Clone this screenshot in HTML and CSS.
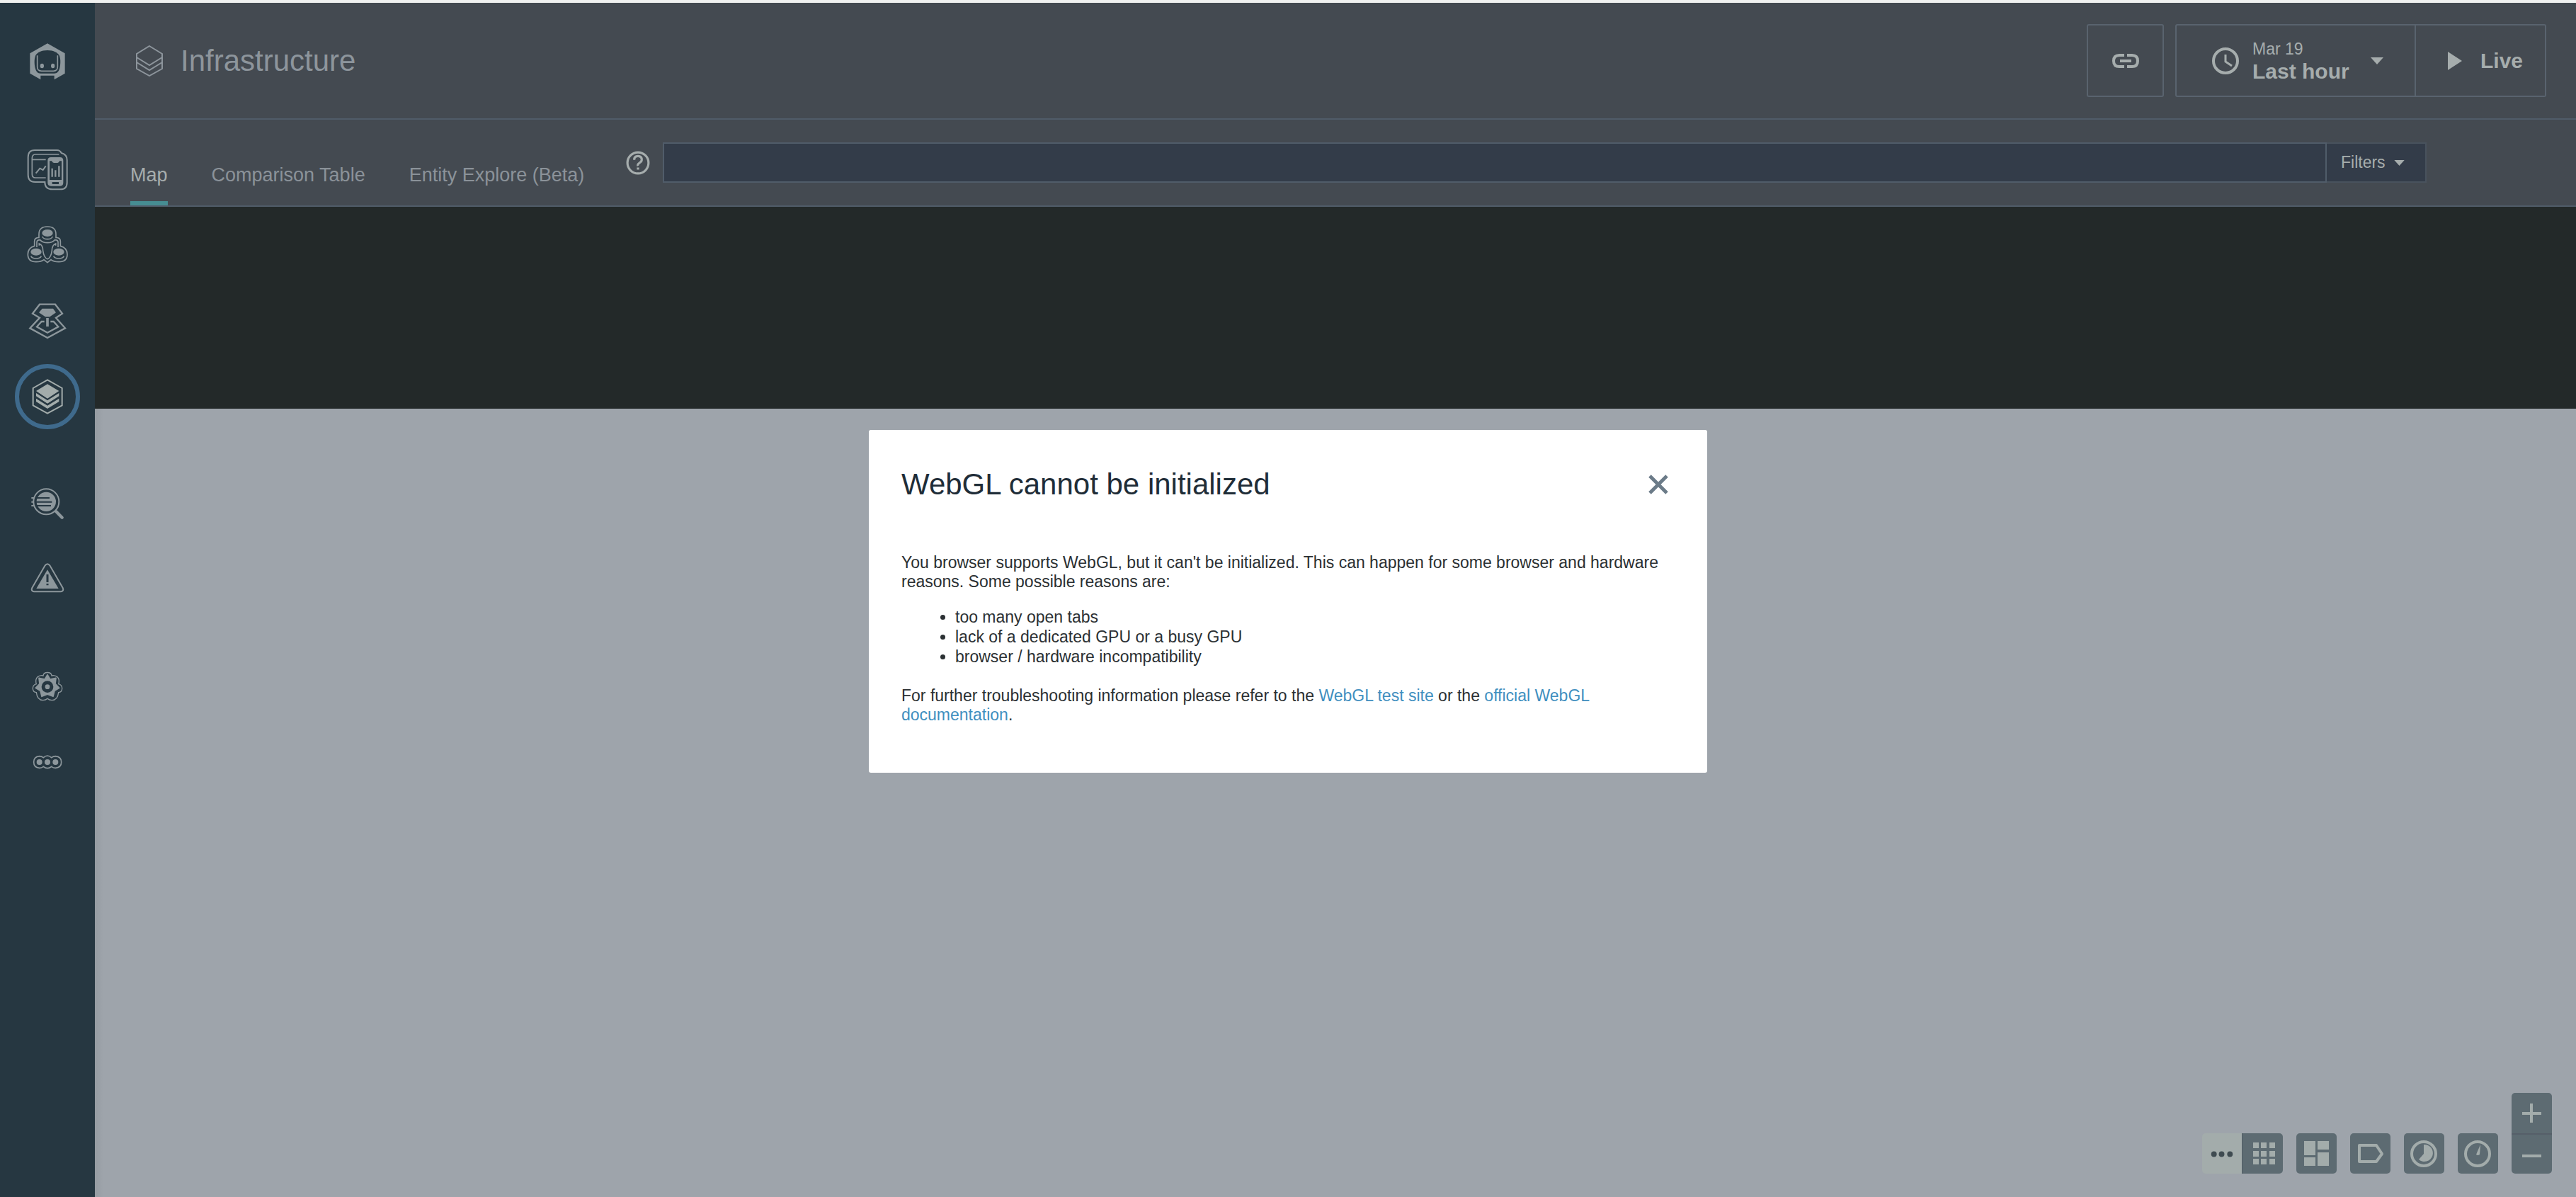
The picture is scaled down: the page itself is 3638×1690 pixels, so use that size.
FILE: index.html
```html
<!DOCTYPE html>
<html lang="en">
<head>
<meta charset="utf-8">
<title>Infrastructure</title>
<link rel="stylesheet" href="styles.css">
</head>
<body>
<div class="app">
  <nav class="sidebar" aria-label="Main">
    <a class="nav-item brand" href="#" aria-label="Home">
      <svg class="nav-icon" viewBox="103 102 192 192">
        <path fill="currentColor" fill-rule="evenodd" d="M199 121 273 163V248L228 274V257H170V274L125 248V163ZM199 150C172 150 155 160 148 173C142 190 144 212 147 225C151 241 158 248 170 248H228C240 248 247 241 251 225C254 212 256 190 250 173C243 160 226 150 199 150Z"/>
        <path fill="none" stroke="currentColor" stroke-width="5" d="M156 172V220Q156 238 174 238H224Q242 238 242 220V172"/>
        <ellipse cx="176" cy="216" rx="8" ry="10" fill="currentColor"/><ellipse cx="222" cy="216" rx="8" ry="10" fill="currentColor"/>
      </svg>
    </a>
    <div class="nav-group">
      <a class="nav-item" href="#" aria-label="Websites and mobile apps">
        <svg class="nav-icon" viewBox="103 85 192 192" fill="none" stroke="currentColor">
          <path stroke-width="6" d="M145 100H240Q252 100 258 112Q282 118 282 142V237Q282 266 254 266H220Q188 266 188 235H147Q117 235 117 205V130Q117 100 145 100Z"/>
          <path stroke-width="5" d="M248 118H148Q134 118 134 134V202Q134 217 148 217H192M136 140H192"/>
          <path stroke-width="6" d="M150 198 167 177 180 184 192 167"/>
          <path fill="currentColor" stroke="none" fill-rule="evenodd" d="M214 130H252Q266 130 266 144V238Q266 252 252 252H214Q200 252 200 238V144Q200 130 214 130ZM208 152V226H259V146H250Q248 154 242 154H226Q219 154 218 146H208ZM219 235V244H247V235Z"/>
          <path stroke-width="7" d="M219 177V213M233 185V213M248 167V213"/>
        </svg>
      </a>
      <a class="nav-item" href="#" aria-label="Applications">
        <svg class="nav-icon" viewBox="103 400 192 192" fill="none" stroke="currentColor" stroke-width="5">
          <path d="M163 450Q163 418 199 418Q235 418 235 450V464Q254 464 254 480V500Q283 508 283 535Q283 567 247 567Q225 567 214 558L199 570 184 558Q173 567 151 567Q116 567 116 535Q116 508 144 500V480Q144 464 163 464Z"/>
          <path d="M154 505V484Q154 474 168 474Q178 486 199 486Q220 486 230 474Q244 474 244 484V505M164 498V490Q180 496 180 520Q184 550 199 555Q214 550 218 520Q218 496 234 490V498"/>
          <g fill="currentColor" stroke="none"><ellipse cx="199" cy="445" rx="23" ry="15"/><ellipse cx="151" cy="525" rx="23" ry="15"/><ellipse cx="247" cy="525" rx="23" ry="15"/></g>
          <path d="M177 460Q182 471 199 471Q216 471 221 460M129 543Q134 553 151 553Q168 553 173 543M225 543Q230 553 247 553Q264 553 269 543"/>
        </svg>
      </a>
      <a class="nav-item" href="#" aria-label="Platforms">
        <svg class="nav-icon" viewBox="103 64 192 192" fill="none" stroke="currentColor" stroke-width="7">
          <path d="M166 90H232L262 129 235 147 274 191 199 232 125 191 166 147 136 129Z"/>
          <path fill="currentColor" stroke="none" d="M177 108H223L235 125 209 143H190L163 125Z"/>
          <path d="M186 163H174L154 185 199 210 245 185 225 163H212"/><path stroke-width="11" d="M199 148V184"/>
        </svg>
      </a>
      <a class="nav-item active" href="#" aria-label="Infrastructure" aria-current="page">
        <svg class="nav-icon" viewBox="103 383 192 192" fill="none" stroke="currentColor" stroke-width="6">
          <path d="M199 408 261 443V516L199 550 138 516V443Z"/>
          <path fill="currentColor" stroke="none" d="M199 426 248 455 199 487 151 455ZM151 464 199 495 248 464V477L199 508 151 477ZM151 487 199 517 248 487V500L199 530 151 500Z"/>
        </svg>
      </a>
    </div>
    <div class="nav-group">
      <a class="nav-item" href="#" aria-label="Analytics">
        <svg class="nav-icon" viewBox="103 56 192 192" fill="none" stroke="currentColor">
          <circle cx="194" cy="144" r="54" stroke-width="6"/>
          <circle cx="194" cy="144" r="41" fill="currentColor" stroke="none"/>
          <path class="cut" stroke-width="6" d="M150 128H208M150 145H218M150 161H214"/>
          <path stroke-width="6" d="M131 128H142M131 145H140M131 161H142"/>
          <path stroke-width="13" stroke-linecap="round" d="M236 186 261 211"/>
        </svg>
      </a>
      <a class="nav-item" href="#" aria-label="Events">
        <svg class="nav-icon" viewBox="103 376 192 192" fill="none" stroke="currentColor" stroke-width="6">
          <path d="M189 413Q199 400 209 413L264 508Q270 521 256 524H142Q128 521 134 508Z"/>
          <path fill="currentColor" stroke="none" d="M199 431 246 511H152Z"/>
          <path class="cut" stroke-width="9" d="M199 451V484M199 490V497"/>
        </svg>
      </a>
    </div>
    <div class="nav-group">
      <a class="nav-item" href="#" aria-label="Settings">
        <svg class="nav-icon" viewBox="103 51 192 192" fill="none" stroke="currentColor">
          <path stroke-width="4" d="M181 102C182 84 216 84 217 102C232 98 248 108 248 124C248 130 248 132 246 137C266 142 266 170 246 173C244 190 238 206 218 206Q206 206 199 199Q192 206 180 206C160 206 154 190 152 173C132 170 132 142 152 137C150 132 150 130 150 124C150 108 166 98 181 102Z"/>
          <path fill="currentColor" stroke="currentColor" stroke-width="5" stroke-linejoin="round" d="M199 98 210 117 235 112 232 136 249 154 229 166 223 190 199 181 175 190 169 166 149 154 166 136 163 112 188 117Z"/>
          <circle class="hole" cx="199" cy="149" r="25"/><circle cx="199" cy="149" r="10" fill="currentColor" stroke="none"/>
        </svg>
      </a>
      <a class="nav-item" href="#" aria-label="More">
        <svg class="nav-icon" viewBox="103 372 192 192" fill="none" stroke="currentColor" stroke-width="5">
          <path d="M182 449Q191 441 199 441Q207 441 216 449Q224 443 233 443Q258 445 258 468Q258 491 233 493Q224 493 216 487Q207 494 199 494Q191 494 182 487Q174 493 165 493Q141 491 141 468Q141 445 165 443Q174 443 182 449Z"/>
          <g fill="currentColor" stroke="none"><circle cx="165" cy="468" r="12"/><circle cx="199" cy="468" r="12"/><circle cx="233" cy="468" r="12"/></g>
        </svg>
      </a>
    </div>
  </nav>

  <main class="main">
    <header class="header">
      <svg class="title-icon" viewBox="0 0 40 44" fill="none" stroke="currentColor" stroke-width="2">
        <path d="M20 1 38 12V33L20 43 2 33V12ZM2 17 20 28 38 17M2 24 20 35 38 24"/>
      </svg>
      <h1 class="title">Infrastructure</h1>
      <div class="header-actions">
        <button class="box-button link-button" aria-label="Copy link">
          <svg class="link-icon" viewBox="0 0 40 24" fill="none" stroke="currentColor" stroke-width="4">
            <path d="M18 4H11Q3 4 3 12T11 20H18M22 4H29Q37 4 37 12T29 20H22M12 12H28"/>
          </svg>
        </button>
        <div class="time-group">
          <button class="box-button time-button">
            <svg class="clock-icon" viewBox="0 0 38 38" fill="none" stroke="currentColor" stroke-width="4">
              <circle cx="19" cy="19" r="17"/><path stroke-width="3" d="M19 10V20L28 26"/>
            </svg>
            <span class="time-text"><span class="time-date">Mar 19</span><span class="time-range">Last hour</span></span>
            <svg class="caret" viewBox="0 0 18 10"><path fill="currentColor" d="M0 0H18L9 10Z"/></svg>
          </button>
          <button class="box-button live-button">
            <svg class="play-icon" viewBox="0 0 20 26"><path fill="currentColor" d="M0 0 20 13 0 26Z"/></svg>
            Live
          </button>
        </div>
      </div>
    </header>

    <div class="toolbar">
      <div class="tabs">
        <a class="tab selected" href="#" aria-current="page">Map</a>
        <a class="tab" href="#">Comparison Table</a>
        <a class="tab" href="#">Entity Explore (Beta)</a>
      </div>
      <div class="search">
        <button class="help" aria-label="Search help">
          <svg class="help-icon" viewBox="0 0 32 32" fill="none" stroke="currentColor" stroke-width="3">
            <circle cx="16" cy="16" r="14"/><path d="M11 12Q11 7 16 7T21 12Q21 14 18 16T16 20M16 22V25"/>
          </svg>
        </button>
        <input class="query" type="text" aria-label="Search query">
        <button class="filters">Filters
          <svg class="caret small" viewBox="0 0 18 10"><path fill="currentColor" d="M0 0H18L9 10Z"/></svg>
        </button>
      </div>
    </div>

    <div class="band"></div>
    <section class="map" aria-label="Map">
      <div class="map-tools">
        <div class="tool-pair">
          <button class="tool on" aria-label="More"><svg viewBox="0 0 57 57" fill="currentColor"><circle cx="17" cy="29" r="4"/><circle cx="28" cy="29" r="4"/><circle cx="40" cy="29" r="4"/></svg></button>
          <button class="tool" aria-label="Grid"><svg viewBox="0 0 57 57" fill="currentColor"><path d="M15 13h8v8h-8zM26 13h8v8h-8zM38 13h8v8h-8zM15 25h8v8h-8zM26 25h8v8h-8zM38 25h8v8h-8zM15 36h8v8h-8zM26 36h8v8h-8zM38 36h8v8h-8z"/></svg></button>
        </div>
        <button class="tool" aria-label="Layout"><svg viewBox="0 0 57 57" fill="currentColor"><path d="M11 11h16v20H11zM30 11h16v12H30zM11 34h16v12H11zM30 27h16v19H30z"/></svg></button>
        <button class="tool" aria-label="Labels"><svg viewBox="0 0 57 57" fill="none" stroke="currentColor" stroke-width="4" stroke-linejoin="round"><path d="M13 17H37L45 29 37 40H13Z"/></svg></button>
        <button class="tool" aria-label="Usage"><svg viewBox="0 0 57 57" fill="none" stroke="currentColor" stroke-width="4"><circle cx="28" cy="29" r="17"/><path fill="currentColor" stroke="none" d="M28 16A12 12 0 1 1 21 37L28 29Z"/></svg></button>
        <button class="tool" aria-label="Performance"><svg viewBox="0 0 57 57" fill="none" stroke="currentColor" stroke-width="4"><circle cx="28" cy="29" r="17"/><path fill="currentColor" stroke="none" d="M32 16 31 30Q28 32 26 30Z"/></svg></button>
        <div class="zoom">
          <button class="tool" aria-label="Zoom in"><svg viewBox="0 0 57 57" stroke="currentColor" stroke-width="4"><path d="M15 29H42M28 15V42"/></svg></button>
          <button class="tool" aria-label="Zoom out"><svg viewBox="0 0 57 57" stroke="currentColor" stroke-width="4"><path d="M15 30H42"/></svg></button>
        </div>
      </div>
    </section>
  </main>
</div>

<div class="overlay">
  <div class="modal" role="dialog" aria-modal="true" aria-labelledby="modal-title">
    <div class="modal-head">
      <h2 class="modal-title" id="modal-title">WebGL cannot be initialized</h2>
      <button class="close" aria-label="Close">
        <svg class="close-icon" viewBox="0 0 28 28" stroke="currentColor" stroke-width="5"><path d="M2 2 26 26M26 2 2 26"/></svg>
      </button>
    </div>
    <div class="modal-body">
      <p>You browser supports WebGL, but it can't be initialized. This can happen for some browser and hardware reasons. Some possible reasons are:</p>
      <ul>
        <li>too many open tabs</li>
        <li>lack of a dedicated GPU or a busy GPU</li>
        <li>browser / hardware incompatibility</li>
      </ul>
      <p>For further troubleshooting information please refer to the <a href="#">WebGL test site</a> or the <a href="#">official WebGL documentation</a>.</p>
    </div>
  </div>
</div>
</body>
</html>
```
FILE: styles.css
```css
* { box-sizing: border-box; }

body {
  margin: 0;
  font-family: "Liberation Sans", Arial, sans-serif;
  font-size: 23px;
  line-height: 27px;
}

button {
  font: inherit;
  color: inherit;
  background: none;
  border: 0;
  padding: 0;
}

svg { display: block; flex: none; }

.app {
  display: flex;
  min-height: 100vh;
  border-top: 4px solid #f0f1f0;
}

/* Sidebar */
.sidebar {
  flex: none;
  display: flex;
  flex-direction: column;
  gap: 44px;
  width: 134px;
  padding-top: 29px;
  background: #263741;
}

.nav-group { display: flex; flex-direction: column; }

.nav-item {
  display: flex;
  align-items: center;
  justify-content: center;
  height: 107px;
  color: #8d979c;
}

.brand { margin-bottom: 1px; }
.nav-icon { width: 64px; height: 64px; }
.cut { stroke: #263741; }
.hole { fill: #263741; stroke: none; }

.active {
  width: 92px;
  height: 92px;
  margin: 8px auto 7px;
  border: 6px solid #3f6a8c;
  border-radius: 50%;
  color: #a3acab;
}

/* Header */
.main {
  flex: 1;
  display: flex;
  flex-direction: column;
  min-width: 0;
}

.header {
  display: flex;
  align-items: center;
  height: 165px;
  padding: 0 42px 0 57px;
  border-bottom: 2px solid #505c69;
  background: #444a51;
  color: #a6adad;
}

.title-icon { width: 40px; height: 44px; color: #8d959c; }

.title {
  margin: 0 0 0 24px;
  font-size: 42px;
  line-height: 48px;
  font-weight: 400;
  color: #8d959c;
}

.header-actions {
  display: flex;
  gap: 16px;
  margin-left: auto;
}

.time-group { display: flex; }

.box-button {
  display: flex;
  align-items: center;
  height: 103px;
  border: 2px solid #59636e;
  border-radius: 3px;
}

.link-button { width: 109px; justify-content: center; }
.link-icon { width: 40px; height: 24px; }

.time-button {
  width: 340px;
  padding-left: 50px;
  border-radius: 3px 0 0 3px;
  text-align: left;
}

.clock-icon { width: 38px; height: 38px; }

.time-text {
  display: flex;
  flex-direction: column;
  margin: 0 30px 0 19px;
  padding-top: 4px;
}

.time-range { font-size: 30px; line-height: 36px; font-weight: 700; }
.caret { width: 18px; height: 10px; }

.live-button {
  width: 184px;
  gap: 26px;
  padding-left: 45px;
  border-left: 0;
  border-radius: 0 3px 3px 0;
  font-size: 30px;
  font-weight: 700;
}

.play-icon { width: 20px; height: 26px; }

/* Tabs and search */
.toolbar {
  display: flex;
  height: 123px;
  padding: 0 211px 0 50px;
  border-bottom: 2px solid #505c69;
  background: #444a51;
}

.tabs { display: flex; gap: 62px; }

.tab {
  display: flex;
  align-items: flex-end;
  padding-bottom: 22px;
  border-bottom: 6px solid transparent;
  font-size: 27px;
  line-height: 30px;
  color: #8b9299;
  text-decoration: none;
  white-space: nowrap;
}

.selected { color: #a6adad; border-color: #468d92; }

.search {
  flex: 1;
  display: flex;
  height: 57px;
  margin: 32px 0 0 59px;
  color: #a6adad;
}

.help { display: flex; align-items: center; margin-right: 18px; }
.help-icon { width: 34px; height: 34px; }

.query {
  flex: 1;
  min-width: 0;
  padding: 0 16px;
  border: 2px solid #505c69;
  border-radius: 0;
  background: #333c49;
  color: inherit;
  font: inherit;
}

.filters {
  display: flex;
  align-items: center;
  gap: 12px;
  width: 141px;
  padding-left: 20px;
  border: 2px solid #48525d;
  border-left: 0;
  background: #333c49;
}

.small { width: 15px; height: 8px; }

/* Map */
.band { height: 285px; background: #232929; }

.map {
  flex: 1;
  display: flex;
  align-items: flex-end;
  justify-content: flex-end;
  padding: 33px 34px;
  background: linear-gradient(90deg, #969ca2, #9ea4ab 12px);
}

.map-tools { display: flex; align-items: flex-end; gap: 19px; }
.tool-pair { display: flex; border-radius: 5px; overflow: hidden; }

.tool {
  width: 57px;
  height: 57px;
  border-radius: 5px;
  background: #5d6b72;
  color: #a3acab;
}

.tool-pair .tool, .zoom .tool { border-radius: 0; }
.tool.on { background: #a3acab; color: #3f4b51; border-right: 1px solid #505c64; }

.zoom {
  display: flex;
  flex-direction: column;
  border-radius: 5px;
  overflow: hidden;
}

.zoom .tool + .tool { border-top: 2px solid #565f69; }

/* Dialog */
.overlay {
  position: fixed;
  inset: 0;
  display: flex;
  align-items: center;
  justify-content: center;
  padding-top: 8px;
}

.modal {
  width: 1184px;
  max-width: 100%;
  padding: 52px 45px 68px 46px;
  border-radius: 3px;
  background: #fff;
  color: #2b3033;
}

.modal-head {
  display: flex;
  align-items: center;
  justify-content: space-between;
  padding-right: 10px;
}

.modal-title {
  margin: 0;
  font-size: 42px;
  line-height: 50px;
  font-weight: 400;
  color: #1f2d38;
}

.close { color: #6b7b88; }
.close-icon { width: 28px; height: 28px; }

.modal-body { margin-top: 72px; }
.modal-body p { margin: 0; }

.modal-body ul {
  margin: 22px 0 28px;
  padding-left: 76px;
  line-height: 28px;
}

.modal-body a { color: #3f8fbf; text-decoration: none; }
```
